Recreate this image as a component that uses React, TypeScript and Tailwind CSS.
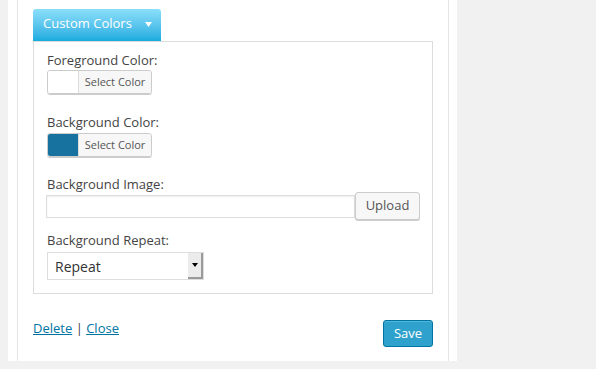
import React from 'react';

const font = { fontFamily: '"Open Sans", "Liberation Sans", sans-serif' };

function ColorPicker({ swatch }: { swatch: string }) {
  return (
    <div className="flex h-[24px] w-[105px] overflow-hidden rounded-[3px] border border-[#cccccc] shadow-[0_1px_0_#cccccc]">
      <div className={`w-[30px] ${swatch}`} />
      <div className="flex flex-1 items-center justify-center border-l border-[#dddddd] bg-[#f7f7f7] text-[11px] text-[#555555]">
        Select Color
      </div>
    </div>
  );
}

function Label({ children, className }: { children: React.ReactNode; className?: string }) {
  return <div className={`text-[13px] leading-[16px] text-[#444444] ${className ?? ''}`}>{children}</div>;
}

export default function App() {
  return (
    <div className="flex h-[369px] w-[598px] items-start bg-[#f1f1f1]" style={font}>
      <div className="w-[8px] shrink-0" />
      <div className="h-[361px] w-[449px] shrink-0 bg-white pl-[9px] pr-[8px]">
        <div className="h-full border-x border-[#e5e5e5] pl-[15px] pr-[15px] pt-[9px]">
          <div className="flex h-[32px] w-[128px] items-center rounded-t-[3px] bg-gradient-to-b from-[#8adffa] to-[#12ace0] pb-[4px] pl-[10px] text-[13px] leading-[16px] text-white">
            <span>Custom Colors</span>
            <svg className="ml-[13px] mt-[2px]" width="7" height="5" viewBox="0 0 7 5">
              <path d="M0 0 H7 L3.5 5 Z" fill="#ffffff" />
            </svg>
          </div>

          <div className="border border-[#dcdcdc] pb-[13px] pl-[13px] pt-[10px]">
            <Label className="mb-[2px]">Foreground Color:</Label>
            <ColorPicker swatch="bg-white" />

            <Label className="mb-[3px] mt-[20px]">Background Color:</Label>
            <ColorPicker swatch="bg-[#17729f]" />

            <Label className="mt-[19px]">Background Image:</Label>
            <div className="flex h-[28px] items-center">
              <div className="-ml-px h-[23px] w-[309px] border border-[#dddddd] bg-white shadow-[inset_0_1px_2px_rgba(0,0,0,0.07)]" />
              <button
                type="button"
                className="h-[28px] w-[65px] rounded-[3px] border border-[#cccccc] bg-[#f7f7f7] text-[13px] text-[#555555] shadow-[0_1px_0_#cccccc]"
              >
                Upload
              </button>
            </div>

            <Label className="mb-[4px] mt-[12px]">Background Repeat:</Label>
            <div className="flex h-[28px] w-[157px] border border-[#dddddd] bg-white">
              <div className="flex flex-1 items-center pl-[7px] text-[14px] text-[#333333]">Repeat</div>
              <div className="flex w-[15px] items-center justify-center border-b-2 border-r-2 border-[#9a9a9a] bg-[#ebebeb]">
                <svg width="6" height="4" viewBox="0 0 6 4">
                  <path d="M0 0 H6 L3 4 Z" fill="#000000" />
                </svg>
              </div>
            </div>
          </div>

          <div className="mt-[26px] flex items-start justify-between">
            <div className="text-[13px] leading-[16px] text-[#444444]">
              <a href="#" className="text-[#0074a2] underline">Delete</a>
              <span> | </span>
              <a href="#" className="text-[#0074a2] underline">Close</a>
            </div>
            <button
              type="button"
              className="h-[27px] w-[50px] rounded-[3px] border border-[#0074a2] bg-[#2ea2cc] text-[13px] text-white shadow-[inset_0_1px_0_rgba(120,200,230,0.5)]"
            >
              Save
            </button>
          </div>
        </div>
      </div>
      <div className="h-full flex-1" />
      <div className="h-full w-[2px] bg-white" />
    </div>
  );
}
